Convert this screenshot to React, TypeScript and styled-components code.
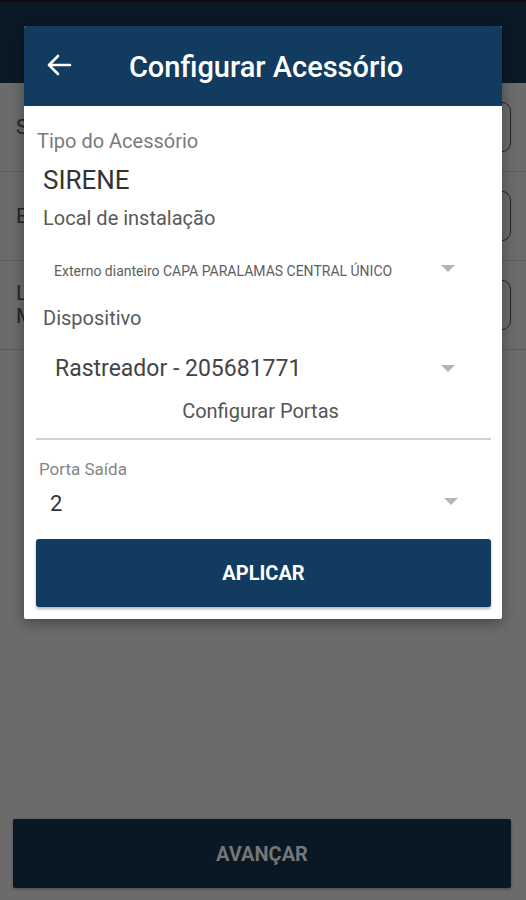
import React from 'react'
import styled, { createGlobalStyle } from 'styled-components'

const GlobalStyle = createGlobalStyle`
  html, body {
    margin: 0;
    padding: 0;
    height: 100%;
  }
  body {
    font-family: Roboto, "Liberation Sans", Arial, sans-serif;
    background: #6b6b6b;
  }
  #root {
    height: 100%;
  }
`

function App() {
  return (
    <>
      <GlobalStyle />
      <Screen>
        <TopStripe />
        <NavBar />
        <FormList>
          <FormRow>
            <RowLabel>Sirene</RowLabel>
            <RowField />
          </FormRow>
          <FormRow>
            <RowLabel>Equipamento</RowLabel>
            <RowField />
          </FormRow>
          <FormRow>
            <RowLabel>
              Local
              <br />
              Modelo
            </RowLabel>
            <RowField />
          </FormRow>
        </FormList>
        <Spacer />
        <NextButton>AVANÇAR</NextButton>

        <Dialog>
          <DialogHeader>
            <BackIcon width="26" height="22" viewBox="0 0 26 22">
              <path d="M24 11H3M12 2L3 11l9 9" fill="none" stroke="#fff" strokeWidth="2.6" strokeLinecap="round" strokeLinejoin="round" />
            </BackIcon>
            <DialogTitle>Configurar Acessório</DialogTitle>
          </DialogHeader>

          <DialogBody>
            <TypeLabel>Tipo do Acessório</TypeLabel>
            <TypeValue>SIRENE</TypeValue>
            <SectionLabel $top={11}>Local de instalação</SectionLabel>
            <Select $size={14} $color="#5e5e5e" $top={21} $height={40} $padLeft={18}>
              <span>Externo dianteiro CAPA PARALAMAS CENTRAL ÚNICO</span>
              <Caret $right={36} $shift={-3} />
            </Select>
            <SectionLabel $top={15}>Dispositivo</SectionLabel>
            <Select $size={23} $color="#444" $top={18} $height={40} $padLeft={19}>
              <span>Rastreador - 205681771</span>
              <Caret $right={36} $shift={0} />
            </Select>
            <PortsLink>Configurar Portas</PortsLink>
            <Divider />
            <PortLabel>Porta Saída</PortLabel>
            <Select $size={22} $color="#333" $top={6} $height={36} $padLeft={14}>
              <span>2</span>
              <Caret $right={33} $shift={-2} />
            </Select>
            <ApplyButton>APLICAR</ApplyButton>
          </DialogBody>
        </Dialog>
      </Screen>
    </>
  )
}

export default App

const Screen = styled.div`
  position: relative;
  height: 100%;
  display: flex;
  flex-direction: column;
  background: #6b6b6b;
  overflow: hidden;
`

const TopStripe = styled.div`
  height: 2px;
  background: #150b0e;
`

const NavBar = styled.div`
  height: 81px;
  background: #0b1825;
`

const FormList = styled.div`
  display: flex;
  flex-direction: column;
`

const FormRow = styled.div`
  display: flex;
  align-items: center;
  justify-content: space-between;
  height: 88px;
  padding: 0 15px 0 16px;
  border-bottom: 1.5px solid #5b5b5b;
`

const RowLabel = styled.div`
  font-size: 21px;
  line-height: 23px;
  color: #262626;
`

const RowField = styled.div`
  width: 260px;
  height: 50px;
  border: 1.5px solid #262626;
  border-radius: 9px;
  box-sizing: border-box;
`

const Spacer = styled.div`
  flex: 1;
`

const NextButton = styled.div`
  margin: 0 15px 12px 13px;
  height: 69px;
  background: #0a1724;
  border-radius: 2px;
  box-shadow: 0 1px 3px rgba(0, 0, 0, 0.35);
  display: flex;
  align-items: center;
  justify-content: center;
  font-size: 20px;
  font-weight: 700;
  color: #767676;
`

const Dialog = styled.div`
  position: absolute;
  left: 24px;
  top: 26px;
  width: 478px;
  background: #fff;
  border-radius: 2px;
  box-shadow: 0 4px 14px rgba(0, 0, 0, 0.35);
  overflow: hidden;
`

const DialogHeader = styled.div`
  height: 80px;
  background: #123c5f;
  display: flex;
  align-items: center;
  padding: 0 24px;
  box-sizing: border-box;
`

const BackIcon = styled.svg`
  flex: none;
  margin-top: -2px;
  margin-left: -2px;
`

const DialogTitle = styled.div`
  flex: 1;
  text-align: center;
  padding-right: 18px;
  font-size: 29px;
  font-weight: 500;
  color: #fff;
  margin-top: 2px;
`

const DialogBody = styled.div`
  display: flex;
  flex-direction: column;
  padding: 23px 11px 12px 12px;
`

const TypeLabel = styled.div`
  padding-left: 1px;
  font-size: 20px;
  line-height: 24px;
  color: #7a7a7a;
`

const TypeValue = styled.div`
  padding-left: 7px;
  margin-top: 12px;
  font-size: 26px;
  line-height: 30px;
  color: #333;
`

const SectionLabel = styled.div<{ $top: number }>`
  padding-left: 7px;
  margin-top: ${p => p.$top}px;
  font-size: 20px;
  line-height: 24px;
  color: #595959;
`

const Select = styled.div<{ $size: number; $color: string; $top: number; $height: number; $padLeft: number }>`
  position: relative;
  display: flex;
  align-items: center;
  margin-top: ${p => p.$top}px;
  height: ${p => p.$height}px;
  padding-left: ${p => p.$padLeft}px;
  font-size: ${p => p.$size}px;
  color: ${p => p.$color};
`

const Caret = styled.div<{ $right: number; $shift: number }>`
  position: absolute;
  right: ${p => p.$right}px;
  top: calc(50% - 3px + ${p => p.$shift}px);
  width: 0;
  height: 0;
  border-left: 7px solid transparent;
  border-right: 7px solid transparent;
  border-top: 7px solid #b5b5b5;
`

const PortsLink = styled.div`
  text-align: center;
  margin-top: 11px;
  padding-right: 6px;
  font-size: 20px;
  line-height: 24px;
  color: #555;
`

const Divider = styled.div`
  height: 2px;
  background: #cfcfcf;
  margin-top: 15px;
`

const PortLabel = styled.div`
  margin-top: 19px;
  padding-left: 3px;
  font-size: 17px;
  line-height: 20px;
  color: #858585;
`

const ApplyButton = styled.div`
  margin-top: 18px;
  height: 68px;
  background: #123c5f;
  border-radius: 3px;
  box-shadow: 0 2px 3px rgba(0, 0, 0, 0.3);
  display: flex;
  align-items: center;
  justify-content: center;
  font-size: 20px;
  font-weight: 700;
  color: #fff;
`
